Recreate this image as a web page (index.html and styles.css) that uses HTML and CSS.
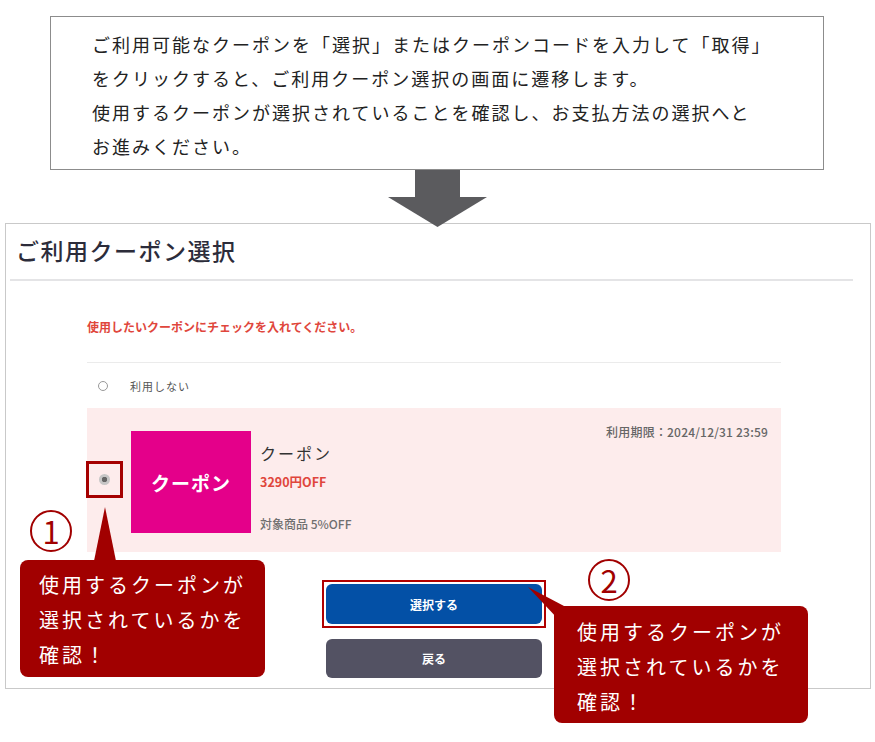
FILE: index.html
```html
<!DOCTYPE html>
<html lang="ja">
<head>
<meta charset="utf-8">
<title>ご利用クーポン選択</title>
<link rel="stylesheet" href="styles.css">
</head>
<body>
<div class="page">
  <div class="intro">
    <p>ご利用可能なクーポンを「選択」またはクーポンコードを入力して「取得」<br>をクリックすると、ご利用クーポン選択の画面に遷移します。<br>使用するクーポンが選択されていることを確認し、お支払方法の選択へと<br>お進みください。</p>
  </div>

  <div class="arrow">
    <svg width="99" height="57" viewBox="0 0 99 57">
      <rect x="27" y="0" width="45" height="28" fill="#5b5b5e"/>
      <polygon points="0,27 99,27 49.5,57" fill="#5b5b5e"/>
    </svg>
  </div>

  <div class="panel">
    <h1 class="panel__title">ご利用クーポン選択</h1>
    <div class="coupons">
      <p class="notice">使用したいクーポンにチェックを入れてください。</p>

      <div class="option option--none">
        <span class="radio"></span>
        <span>利用しない</span>
      </div>

      <div class="option option--coupon">
        <div class="radio-mark"><span class="radio radio--on"></span></div>
        <div class="thumb">クーポン</div>
        <div class="info">
          <div class="info__name">クーポン</div>
          <div class="info__price">3290円OFF</div>
          <div class="info__target">対象商品 5%OFF</div>
        </div>
        <div class="expiry">利用期限：2024/12/31 23:59</div>
      </div>

      <div class="actions">
        <span class="highlight"><button class="btn btn--select">選択する</button></span>
        <button class="btn btn--back">戻る</button>
      </div>
    </div>
  </div>

  <!-- annotations -->
  <div class="num num--one">1</div>
  <div class="bubble bubble--one">使用するクーポンが<br>選択されているかを<br>確認！</div>

  <div class="num num--two">2</div>
  <div class="bubble bubble--two">使用するクーポンが<br>選択されているかを<br>確認！</div>
</div>
</body>
</html>
```

FILE: styles.css
```css
body {
  margin: 0;
  background: #fff;
  font-family: "Noto Sans CJK JP", "Noto Sans", sans-serif;
}

.page {
  position: relative;
  width: 875px;
  height: 742px;
  overflow: hidden;
}

/* explanation box */
.intro {
  margin: 16px 0 0 50px;
  width: 774px;
  height: 154px;
  box-sizing: border-box;
  border: 1px solid #8c8c8c;
  padding: 10px 0 0 41px;
}
.intro p {
  margin: 0;
  font-size: 18px;
  line-height: 34px;
  letter-spacing: 2px;
  color: #222;
  white-space: nowrap;
}

.arrow {
  height: 53px;
  display: flex;
  justify-content: center;
  position: relative;
  z-index: 1;
}
.arrow svg {
  display: block;
  overflow: visible;
}

/* screenshot panel */
.panel {
  margin-left: 5px;
  width: 866px;
  height: 466px;
  box-sizing: border-box;
  border: 1px solid #c9c9c9;
}
.panel__title {
  margin: 0 17px 0 4px;
  padding-left: 6px;
  height: 55px;
  line-height: 52px;
  font-size: 23px;
  font-weight: 500;
  letter-spacing: 1.5px;
  color: #2c2c3a;
  border-bottom: 2px solid #e4e4e6;
}

.coupons {
  margin-left: 81px;
  width: 694px;
}
.notice {
  margin: 38px 0 27px;
  font-size: 12px;
  line-height: 16px;
  font-weight: 700;
  color: #e0463c;
}

.option--none {
  display: flex;
  align-items: center;
  height: 45px;
  padding-left: 11px;
  border-top: 1px solid #ebebeb;
  font-size: 11px;
  letter-spacing: 1px;
  color: #555;
}
.radio {
  width: 8px;
  height: 8px;
  border: 1px solid #999;
  border-radius: 50%;
  margin-right: 22px;
  background: #fff;
}

.option--coupon {
  display: flex;
  align-items: flex-start;
  height: 144px;
  background: #fdecec;
}
.radio-mark {
  margin: 53px 0 0 -1px;
  width: 37px;
  height: 37px;
  box-sizing: border-box;
  border: 3px solid #a50000;
  display: flex;
  align-items: center;
  justify-content: center;
}
.radio--on {
  width: 11px;
  height: 11px;
  margin: 0;
  border: 0;
  background: radial-gradient(circle, #666 0 2.5px, #c6c6c6 3px);
}
.thumb {
  margin: 23px 0 0 8px;
  width: 120px;
  height: 102px;
  background: #e4008a;
  color: #fff;
  font-size: 19px;
  font-weight: 700;
  letter-spacing: 1px;
  display: flex;
  align-items: center;
  justify-content: center;
}
.info {
  margin: 35px 0 0 9px;
}
.info__name {
  font-size: 16px;
  line-height: 20px;
  letter-spacing: 2px;
  color: #333;
}
.info__price {
  margin-top: 11px;
  font-size: 12.5px;
  line-height: 16px;
  font-weight: 700;
  color: #e0463c;
}
.info__target {
  margin-top: 26px;
  font-size: 12px;
  line-height: 16px;
  font-weight: 500;
  color: #6f6f6f;
}
.expiry {
  margin: 16px 13px 0 auto;
  font-size: 12px;
  line-height: 16px;
  font-weight: 500;
  letter-spacing: 0.2px;
  color: #666;
}

.actions {
  display: flex;
  flex-direction: column;
  align-items: center;
  margin-top: 28px;
}
.highlight {
  display: block;
  border: 2px solid #b00000;
  padding: 2px;
}
.btn {
  display: block;
  width: 216px;
  border: 0;
  border-radius: 6px;
  color: #fff;
  font-family: "Noto Sans CJK JP", sans-serif;
  font-size: 12px;
  font-weight: 700;
  padding: 0;
}
.btn--select {
  height: 40px;
  background: #0350a6;
}
.btn--back {
  margin-top: 11px;
  height: 39px;
  background: #535263;
}

/* callouts */
.num {
  position: absolute;
  width: 38px;
  height: 38px;
  border: 2px solid #a10000;
  border-radius: 50%;
  color: #a10000;
  font-size: 31px;
  line-height: 38px;
  text-align: center;
}
.num--one { left: 30px; top: 510px; }
.num--two { left: 588px; top: 559px; }

.bubble {
  position: absolute;
  box-sizing: border-box;
  height: 117px;
  border-radius: 8px;
  background: #a10000;
  color: #fff;
  font-size: 20px;
  line-height: 35px;
  letter-spacing: 3px;
  white-space: nowrap;
}
.bubble::before {
  content: "";
  position: absolute;
  background: #a10000;
}
.bubble--one {
  left: 20px;
  top: 560px;
  width: 245px;
  padding: 7px 0 0 19px;
}
.bubble--one::before {
  left: 74px;
  top: -53px;
  width: 22px;
  height: 54px;
  clip-path: polygon(50% 0, 100% 100%, 0 100%);
}
.bubble--two {
  left: 554px;
  top: 606px;
  width: 254px;
  padding: 8px 0 0 23px;
}
.bubble--two::before {
  left: -26px;
  top: -19px;
  width: 40px;
  height: 32px;
  clip-path: polygon(0 0, 36px 19px, 30px 32px);
}
```
